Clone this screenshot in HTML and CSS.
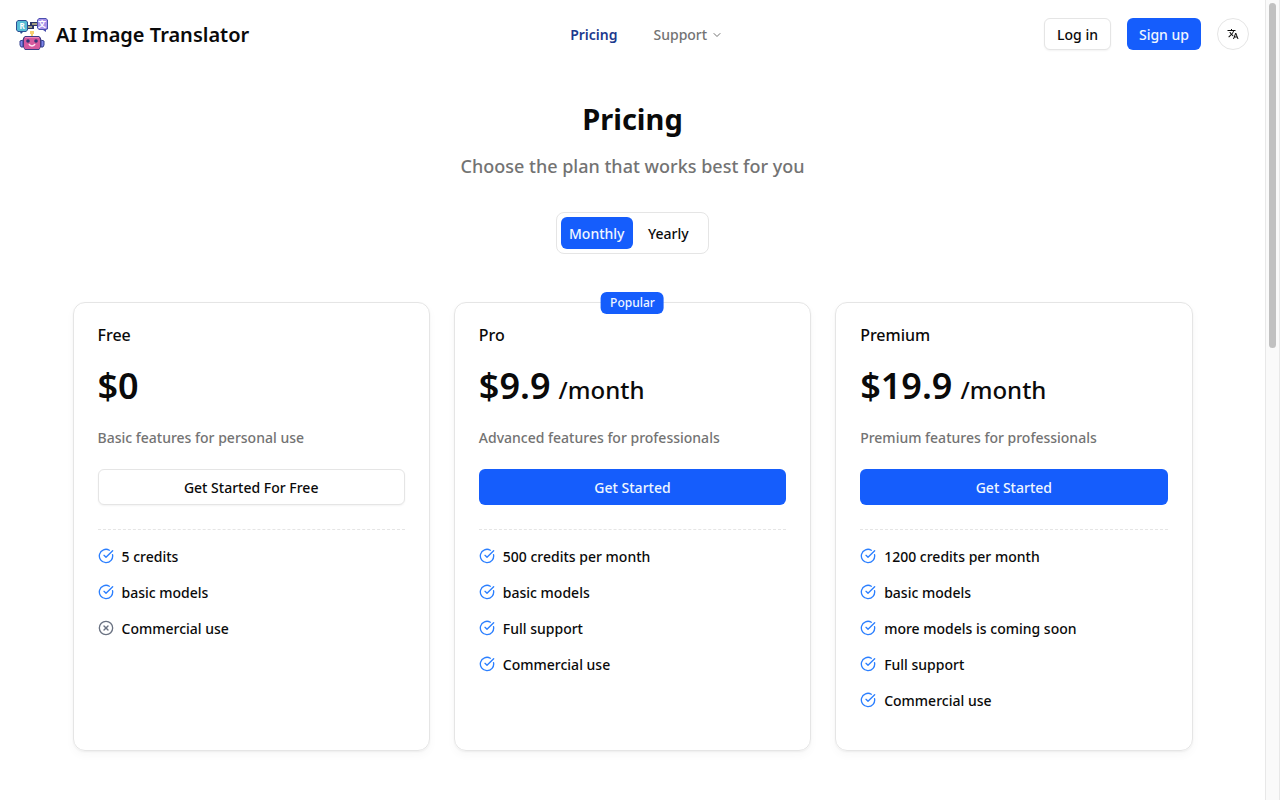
FILE: index.html
```html
<!DOCTYPE html>
<html lang="en">
<head>
    <meta charset="UTF-8">
    <meta name="viewport" content="width=device-width, initial-scale=1.0">
    <title>Pricing - AI Image Translator</title>
    <link rel="stylesheet" href="styles.css">
</head>
<body>
    <!-- Shared icons -->
    <svg class="icon-defs" aria-hidden="true">
        <symbol id="icon-check" viewBox="0 0 24 24">
            <path d="M21.801 10A10 10 0 1 1 17 3.335"/>
            <path d="m9 11 3 3L22 4"/>
        </symbol>
        <symbol id="icon-x" viewBox="0 0 24 24">
            <circle cx="12" cy="12" r="10"/>
            <path d="m15 9-6 6"/>
            <path d="m9 9 6 6"/>
        </symbol>
    </svg>

    <div class="page">
        <header class="navbar">
            <a class="brand" href="#">
                <svg class="logo" viewBox="0 0 32 32" aria-hidden="true">
                    <path d="M10 9h6V6h6" fill="none" stroke="#2b3566" stroke-width="4"/>
                    <path d="M11 9h5M16 6h5" fill="none" stroke="#c9bd86" stroke-width="1.5"/>
                    <path d="M2 2h8l2 2v8l-2 2H7l-2 2-1-2H2l-2-2V4z" fill="#2c4f94"/>
                    <path d="M2 3h8l1 1v8l-1 1H2l-1-1V4z" fill="#56bcd4"/>
                    <path d="M23 0h7l2 2v9l-2 1v2l-3-2h-4l-2-2V2z" fill="#4a4fae"/>
                    <path d="M23 1h7l1 1v8l-1 1h-7l-1-1V2z" fill="#a892e8"/>
                    <text x="6" y="11" class="logo-text">R</text>
                    <text x="26" y="9" class="logo-text">文</text>
                    <path d="M14 13h4v3h-1v2h-2v-2h-1z" fill="#f8cf72"/>
                    <path d="M7 22v7H5l-1-2v-4zM25 22v7h2l1-2v-4z" fill="#7d83ea" stroke="#34408c"/>
                    <path d="M9 18h14l2 2v9l-2 3H9l-2-3v-9z" fill="#403a84"/>
                    <path d="M9 19h14l1 2v8l-1 2H9l-1-2v-8z" fill="#d65a9e"/>
                    <path d="M9 19h14v1H9z" fill="#ee86ba"/>
                    <circle cx="12" cy="23" r="1.8" fill="#33357a"/>
                    <circle cx="20" cy="23" r="1.8" fill="#33357a"/>
                    <path d="M13 26c1 2.5 5 2.5 6 0" fill="none" stroke="#ffe3f1" stroke-width="1.5"/>
                </svg>
                <span>AI Image Translator</span>
            </a>

            <nav class="menu">
                <a class="menu-link active" href="#">Pricing</a>
                <button class="menu-link" type="button">
                    Support
                    <svg class="chevron" viewBox="0 0 24 24" aria-hidden="true"><path d="m6 9 6 6 6-6"/></svg>
                </button>
            </nav>

            <div class="actions">
                <button class="btn btn-outline" type="button">Log in</button>
                <a class="btn btn-primary" href="#">Sign up</a>
                <button class="btn btn-round" type="button" aria-label="Change language">
                    <svg viewBox="0 0 24 24" aria-hidden="true">
                        <path d="m12.87 15.07-2.54-2.51.03-.03A17.52 17.52 0 0 0 14.07 6H17V4h-7V2H8v2H1v2h11.17C11.5 7.92 10.44 9.75 9 11.35 8.07 10.32 7.3 9.19 6.69 8h-2c.73 1.63 1.73 3.17 2.98 4.56l-5.09 5.02L4 19l5-5 3.11 3.11.76-2.04zM18.5 10h-2L12 22h2l1.12-3h4.75L21 22h2l-4.5-12zm-2.62 7 1.62-4.33L19.12 17h-3.24z"/>
                    </svg>
                </button>
            </div>
        </header>

        <main class="pricing">
            <h1>Pricing</h1>
            <p class="subtitle">Choose the plan that works best for you</p>

            <div class="period" role="group" aria-label="Billing period">
                <button class="period-item selected" type="button" aria-pressed="true">Monthly</button>
                <button class="period-item" type="button" aria-pressed="false">Yearly</button>
            </div>

            <div class="plans">
                <section class="plan">
                    <h2>Free</h2>
                    <p class="price">$0</p>
                    <p class="description">Basic features for personal use</p>
                    <button class="btn btn-outline btn-plan" type="button">Get Started For Free</button>
                    <ul class="features">
                        <li><svg class="icon"><use href="#icon-check"/></svg>5 credits</li>
                        <li><svg class="icon"><use href="#icon-check"/></svg>basic models</li>
                        <li><svg class="icon icon-off"><use href="#icon-x"/></svg>Commercial use</li>
                    </ul>
                </section>

                <section class="plan">
                    <span class="badge">Popular</span>
                    <h2>Pro</h2>
                    <p class="price">$9.9 <span>/month</span></p>
                    <p class="description">Advanced features for professionals</p>
                    <button class="btn btn-primary btn-plan" type="button">Get Started</button>
                    <ul class="features">
                        <li><svg class="icon"><use href="#icon-check"/></svg>500 credits per month</li>
                        <li><svg class="icon"><use href="#icon-check"/></svg>basic models</li>
                        <li><svg class="icon"><use href="#icon-check"/></svg>Full support</li>
                        <li><svg class="icon"><use href="#icon-check"/></svg>Commercial use</li>
                    </ul>
                </section>

                <section class="plan">
                    <h2>Premium</h2>
                    <p class="price">$19.9 <span>/month</span></p>
                    <p class="description">Premium features for professionals</p>
                    <button class="btn btn-primary btn-plan" type="button">Get Started</button>
                    <ul class="features">
                        <li><svg class="icon"><use href="#icon-check"/></svg>1200 credits per month</li>
                        <li><svg class="icon"><use href="#icon-check"/></svg>basic models</li>
                        <li><svg class="icon"><use href="#icon-check"/></svg>more models is coming soon</li>
                        <li><svg class="icon"><use href="#icon-check"/></svg>Full support</li>
                        <li><svg class="icon"><use href="#icon-check"/></svg>Commercial use</li>
                    </ul>
                </section>
            </div>
        </main>
    </div>

    <div class="scrollbar" aria-hidden="true">
        <div class="scrollbar-thumb"></div>
    </div>
</body>
</html>
```
FILE: styles.css
```css
* {
    box-sizing: border-box;
}

body {
    margin: 0;
    min-height: 100vh;
    display: flex;
    background-color: #ffffff;
    color: #0a0a0a;
    font-family: "Noto Sans", "Noto Sans CJK SC", sans-serif;
    font-size: 14px;
    font-weight: 500;
    line-height: 20px;
}

h1, h2, p, ul {
    margin: 0;
    padding: 0;
}

a {
    color: inherit;
    text-decoration: none;
}

button {
    font: inherit;
    color: inherit;
    cursor: pointer;
}

.icon-defs {
    display: none;
}

.page {
    flex: 1;
    min-width: 0;
}

/* Top bar */
.navbar {
    display: flex;
    align-items: center;
    justify-content: space-between;
    padding: 18px 16px;
}

.brand {
    display: flex;
    align-items: center;
    gap: 8px;
    font-size: 20px;
    font-weight: 600;
    line-height: 28px;
}

.brand span {
    padding-top: 2px;
}

.logo {
    width: 32px;
    height: 32px;
}

.logo-text {
    fill: #ffffff;
    font-size: 8px;
    font-weight: 700;
    text-anchor: middle;
}

.menu {
    display: flex;
    align-items: center;
    gap: 36px;
}

.menu-link {
    display: flex;
    align-items: center;
    gap: 4px;
    padding: 2px 0 0;
    border: none;
    background: none;
    color: #737373;
}

.menu-link.active {
    color: #1c398e;
    font-weight: 600;
}

.chevron {
    width: 12px;
    height: 12px;
    fill: none;
    stroke: currentColor;
    stroke-width: 2;
    stroke-linecap: round;
    stroke-linejoin: round;
}

.actions {
    display: flex;
    align-items: center;
    gap: 16px;
}

/* Buttons */
.btn {
    display: flex;
    align-items: center;
    justify-content: center;
    height: 32px;
    padding: 2px 12px 0;
    border: 1px solid #e5e5e5;
    border-radius: 6px;
    background-color: #ffffff;
}

.btn-outline {
    box-shadow: 0 1px 2px rgba(0, 0, 0, 0.05);
}

.btn-primary {
    border: none;
    background-color: #155dfc;
    color: #eff6ff;
}

.btn-round {
    width: 32px;
    padding: 0;
    border-radius: 50%;
}

.btn-round svg {
    width: 12px;
    height: 12px;
    fill: currentColor;
}

.btn-plan {
    width: 100%;
    height: 36px;
}

/* Pricing */
.pricing {
    display: flex;
    flex-direction: column;
    align-items: center;
    max-width: 1152px;
    margin: 0 auto;
    padding: 32px 16px 48px;
}

h1 {
    font-size: 29px;
    font-weight: 700;
    line-height: 38px;
}

.subtitle {
    margin-top: 14px;
    color: #737373;
    font-size: 18px;
    line-height: 28px;
}

.period {
    display: grid;
    grid-template-columns: 1fr 1fr;
    margin-top: 32px;
    padding: 4px;
    border: 1px solid #e5e5e5;
    border-radius: 8px;
}

.period-item {
    height: 32px;
    padding: 2px 8px 0;
    border: none;
    border-radius: 6px;
    background: none;
}

.period-item.selected {
    background-color: #155dfc;
    color: #eff6ff;
}

.plans {
    display: grid;
    grid-template-columns: repeat(3, 1fr);
    gap: 24px;
    width: 100%;
    margin-top: 48px;
}

.plan {
    position: relative;
    padding: 24px 24px 39px;
    border: 1px solid #e5e5e5;
    border-radius: 12px;
    box-shadow: 0 1px 2px rgba(0, 0, 0, 0.05), 0 4px 10px rgba(0, 0, 0, 0.03);
}

.badge {
    position: absolute;
    top: -11px;
    left: 50%;
    transform: translateX(-50%);
    padding: 3px 9px;
    border-radius: 6px;
    background-color: #155dfc;
    color: #eff6ff;
    font-size: 12px;
    line-height: 16px;
}

h2 {
    font-size: 16px;
    font-weight: 500;
    line-height: 16px;
}

.price {
    display: flex;
    align-items: baseline;
    gap: 8px;
    height: 46px;
    margin-top: 20px;
    font-size: 36px;
    font-weight: 600;
    line-height: 46px;
}

.price span {
    font-size: 24px;
    font-weight: 500;
    line-height: 28px;
}

.description {
    margin: 18px 0 20px;
    color: #737373;
    line-height: 22px;
}

.features {
    display: flex;
    flex-direction: column;
    gap: 16px;
    margin-top: 24px;
    padding-top: 17px;
    border-top: 1px dashed #e5e5e5;
    list-style: none;
}

.features li {
    display: flex;
    align-items: flex-start;
    gap: 8px;
}

.icon {
    flex: none;
    width: 16px;
    height: 16px;
    margin-top: 1px;
    fill: none;
    stroke: #2b7fff;
    stroke-width: 2;
    stroke-linecap: round;
    stroke-linejoin: round;
}

.icon-off {
    stroke: #6a7282;
}

/* Scrollbar track at the right edge */
.scrollbar {
    width: 15px;
    padding: 3px;
    border: 1px solid #e8e8e8;
    border-width: 0 1px;
    background-color: #fafafa;
}

.scrollbar-thumb {
    height: 345px;
    border-radius: 4px;
    background-color: #c1c1c1;
}

@media (max-width: 900px) {
    .plans {
        grid-template-columns: 1fr;
    }

    .menu {
        display: none;
    }
}
```
